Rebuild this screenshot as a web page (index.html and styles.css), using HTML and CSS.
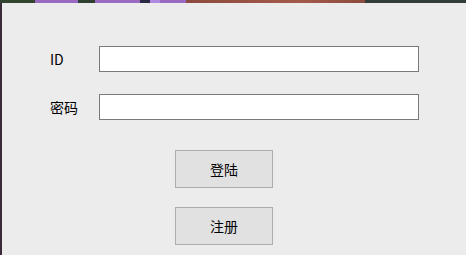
FILE: index.html
```html
<!DOCTYPE html>
<html>
<head>
    <title>登陆</title>
    <link rel="stylesheet" href="styles.css">
</head>
<body>
    <div class="desktop">
        <div class="window">
            <div class="form-row">
                <label for="uid">ID</label>
                <input type="text" id="uid" class="field">
            </div>
            <div class="form-row">
                <label for="pwd">密码</label>
                <input type="password" id="pwd" class="field">
            </div>
            <div class="actions">
                <button class="btn">登陆</button>
                <button class="btn">注册</button>
            </div>
        </div>
    </div>
</body>
</html>
```

FILE: styles.css
```css
html, body {
    margin: 0;
    padding: 0;
    height: 100%;
    overflow: hidden;
}

.desktop {
    height: 100%;
    padding: 3px 0 0 2px;
    box-sizing: border-box;
    background: linear-gradient(to right,
        #34452f 0, #34452f 35px,
        #9a6ac2 35px, #9a6ac2 78px,
        #2f3f30 78px, #2f3f30 95px,
        #9b6bc4 95px, #9b6bc4 140px,
        #2a2a45 140px, #2a2a45 150px,
        #b08ae0 150px, #b08ae0 160px,
        #9a6ac2 160px, #9a6ac2 186px,
        #8c4a3e 186px, #a45a4a 300px, #8c4a3e 365px,
        #333d38 365px, #333d38 466px);
    background-size: 100% 3px;
    background-repeat: no-repeat;
    background-color: #3b2a38;
}

.window {
    height: 100%;
    background-color: #ececec;
    font-family: "SimSun", "Noto Sans CJK SC", sans-serif;
    font-size: 14px;
    color: #000;
    padding: 43px 0 0 47px;
    box-sizing: border-box;
}

.form-row {
    display: flex;
    align-items: center;
    height: 26px;
    margin-bottom: 22px;
}

.form-row label {
    width: 49px;
    padding-left: 1px;
}

.field {
    width: 320px;
    height: 26px;
    box-sizing: border-box;
    border: 1px solid #7a7a7a;
    background: #fff;
    margin: 0;
    padding: 0 4px;
    outline: none;
}

.actions {
    display: flex;
    flex-direction: column;
    gap: 19px;
    padding-left: 126px;
    margin-top: 30px;
}

.btn {
    width: 98px;
    height: 38px;
    background-color: #e1e1e1;
    border: 1px solid #adadad;
    font-family: "SimSun", "Noto Sans CJK SC", sans-serif;
    font-size: 14px;
    color: #000;
    padding: 0;
}
```
